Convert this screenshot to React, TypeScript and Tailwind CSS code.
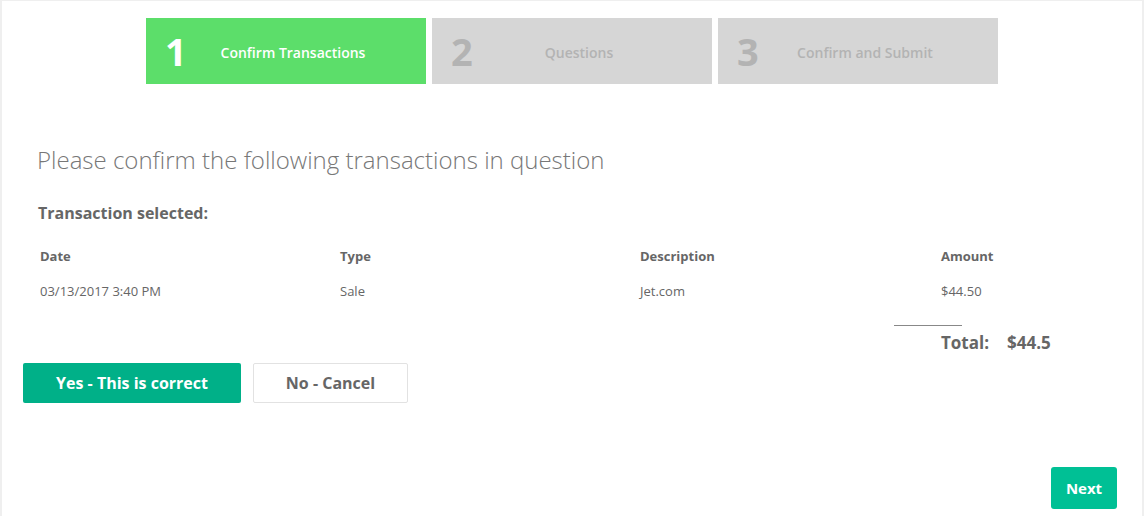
import React from 'react';

const steps = [
  { n: '1', label: 'Confirm Transactions', active: true },
  { n: '2', label: 'Questions', active: false },
  { n: '3', label: 'Confirm and Submit', active: false },
];

const columns = ['Date', 'Type', 'Description', 'Amount'];
const row = ['03/13/2017 3:40 PM', 'Sale', 'Jet.com', '$44.50'];

export default function App() {
  return (
    <div
      className="w-[1144px] h-[516px] overflow-hidden bg-white border-l-2 border-r-2 border-t border-[#efefef] text-[#666]"
      style={{ fontFamily: '"Open Sans", "Liberation Sans", sans-serif' }}
    >
      {/* Steps */}
      <div className="flex gap-[6px] pl-[144px] pt-[17px]">
        {steps.map((s) => (
          <div
            key={s.n}
            className={`flex items-center w-[280px] h-[66px] ${s.active ? 'bg-[#5cde6a] text-white' : 'bg-[#d6d6d6] text-[#b3b3b3]'}`}
          >
            <div className="w-[40px] ml-[19px] text-[38px] font-bold leading-none">{s.n}</div>
            <div className="flex-1 text-center pr-[45px] pt-[3px] text-[14px] font-semibold">{s.label}</div>
          </div>
        ))}
      </div>

      <div className="pl-[35px] pt-[61px]">
        <h1 className="text-[24px] font-light text-[#777] leading-[30px]">
          Please confirm the following transactions in question
        </h1>
        <div className="mt-[28px] pl-[1px] text-[16px] font-bold text-[#666] leading-[20px]">Transaction selected:</div>

        {/* Table */}
        <div className="mt-[24px] pl-[3px]">
          <div className="grid grid-cols-[300px_300px_301px_200px] text-[13px] font-bold text-[#666] leading-[18px]">
            {columns.map((c) => (
              <div key={c}>{c}</div>
            ))}
          </div>
          <div className="grid grid-cols-[300px_300px_301px_200px] mt-[17px] text-[13px] text-[#666] leading-[18px]">
            {row.map((c) => (
              <div key={c}>{c}</div>
            ))}
          </div>
        </div>

        {/* Total */}
        <div className="flex flex-col items-start pl-[857px] mt-[25px]">
          <div className="w-[68px] border-t border-[#888]" />
          <div className="flex mt-[6px] pl-[47px] text-[17px] font-bold text-[#666] leading-[22px]">
            <span className="w-[66px]">Total:</span>
            <span>$44.5</span>
          </div>
        </div>
      </div>

      {/* Actions */}
      <div className="flex gap-[12px] pl-[21px] mt-[9px]">
        <button className="w-[218px] h-[40px] bg-[#00b088] text-white text-[16px] font-bold rounded-[2px]">
          Yes - This is correct
        </button>
        <button className="w-[155px] h-[40px] bg-white border border-[#e2e2e2] text-[#666] text-[16px] font-bold rounded-[2px]">
          No - Cancel
        </button>
      </div>

      <div className="flex justify-end pr-[25px] mt-[64px]">
        <button className="w-[66px] h-[42px] bg-[#00c095] text-white text-[15px] font-bold rounded-[3px]">Next</button>
      </div>
    </div>
  );
}
